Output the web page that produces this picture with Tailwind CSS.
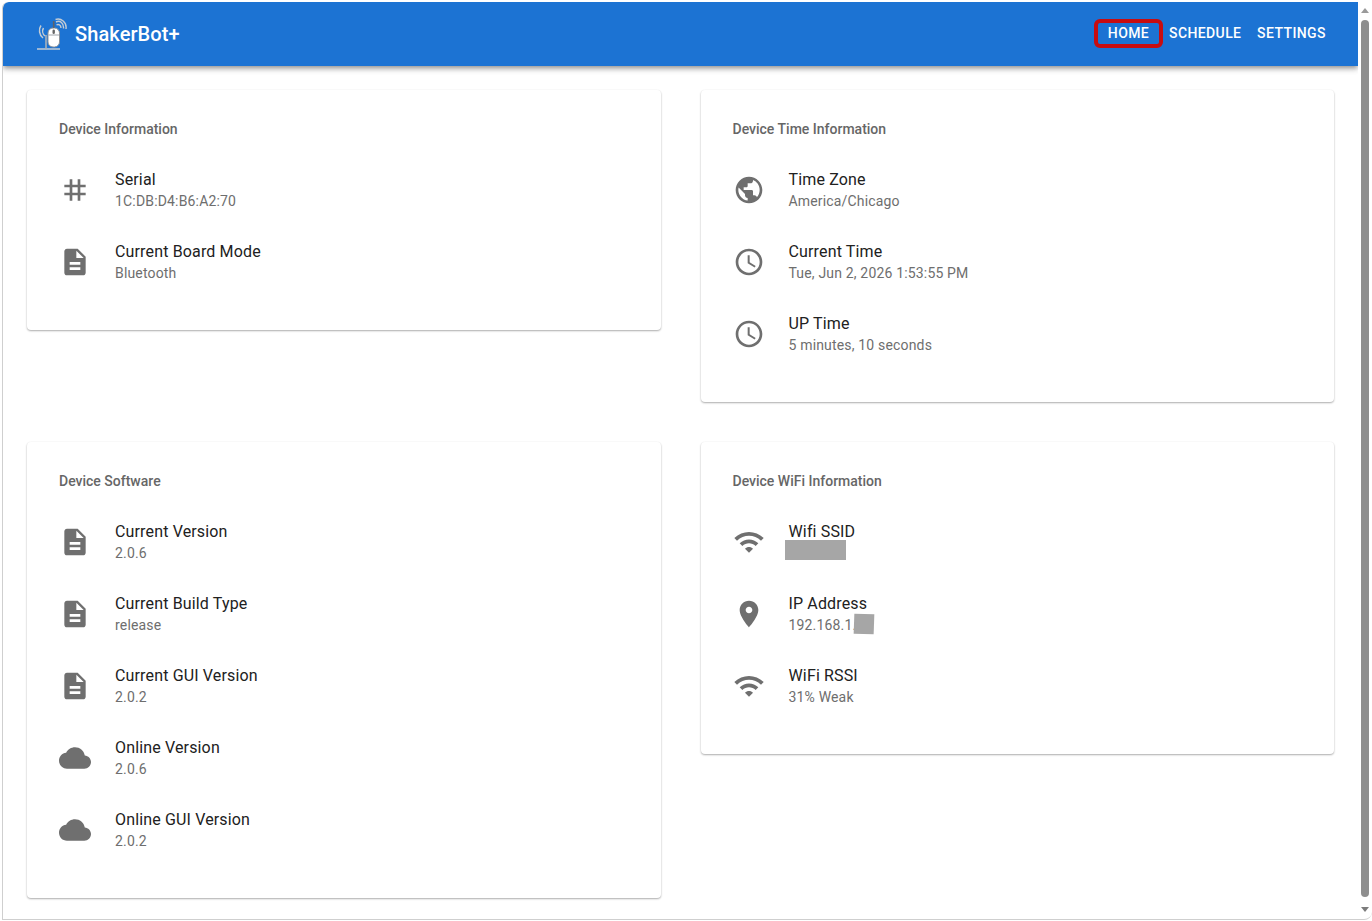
<!DOCTYPE html>
<html lang="en">
<head>
  <meta charset="UTF-8">
  <title>ShakerBot+</title>
  <script src="https://cdn.jsdelivr.net/npm/@tailwindcss/browser@4"></script>
</head>
<body class="bg-white font-['Roboto',sans-serif] overflow-hidden">
  <div class="w-[1372px] h-[921px] flex pt-[2px] pl-[2px] overflow-hidden">
    <div class="w-[1356px] h-[918px] border-l border-b border-[#cfcfcf] rounded-tl-[6px] overflow-hidden">
      <!-- app bar -->
      <header class="relative z-10 h-[64px] bg-[#1c73d3] rounded-tl-[6px] flex items-center pl-[33px] pr-[32px] shadow-[0_2px_4px_-1px_rgba(0,0,0,.3),0_4px_5px_0_rgba(0,0,0,.14),0_1px_10px_0_rgba(0,0,0,.12)]">
        <svg class="w-[32px] h-[32px]" viewBox="0 0 32 32" fill="none">
          <path d="M1 31H24" stroke="#c4ccd4" stroke-width="1.600"/>
          <path d="M10 31V17" stroke="#aab2ba" stroke-width="1.600"/>
          <path d="M9 18C6.500 16 6 12.500 7.500 10M7 20C3 17 2.500 11 5 7.500" stroke="#c4ccd4" stroke-width="1.500"/>
          <path d="M20.500 7C22.500 5.800 25 7 25 10M20 4C24 2 28 5 27.500 10.500M19.500 1.500C25 -.2 31 4 30 11" stroke="#c4ccd4" stroke-width="1.400"/>
          <rect x="12" y="10" width="11.500" height="19" rx="5" fill="#fff" stroke="#8b9198"/>
          <path d="M12.500 17H23" stroke="#a0a5ab"/>
          <path d="M17.700 10V3" stroke="#5f6369" stroke-width="1.600"/>
          <rect x="16.500" y="11.500" width="2.400" height="4.500" rx="1.200" fill="#666"/>
        </svg>
        <div class="ml-[7px] text-[20px] leading-[32px] font-medium tracking-[.1px] text-white">ShakerBot+</div>
        <nav class="ml-auto flex items-center h-full text-white text-[14px] font-medium tracking-[.4px] mb-[1px]">
          <a class="w-[69px] h-[29px] flex items-center justify-center border-[4px] border-[#c80c10] rounded-[6px]">HOME</a>
          <a class="ml-[6px] w-[72px] text-center">SCHEDULE</a>
          <a class="ml-[16px] w-[69px] text-center">SETTINGS</a>
        </nav>
      </header>

      <main class="p-[24px] grid grid-cols-2 gap-x-[40px] gap-y-[40px] items-start content-start">
        <!-- Device Information -->
        <section class="bg-white rounded-[4px] p-[32px] h-[240px] shadow-[0_1px_2px_0_rgba(0,0,0,.32),0_0_2px_0_rgba(0,0,0,.03)]">
          <h2 class="text-[14px] leading-[14px] font-medium text-[#666] mb-[18px]">Device Information</h2>
          <div class="h-[72px] flex items-center">
            <svg class="w-[32px] h-[32px] fill-[#6f6f6f] shrink-0" viewBox="0 0 24 24"><path d="M20 10V8h-4V4h-2v4h-4V4H8v4H4v2h4v4H4v2h4v4h2v-4h4v4h2v-4h4v-2h-4v-4h4zm-6 4h-4v-4h4v4z"/></svg>
            <div class="ml-[24px]">
              <div class="text-[16px] leading-[22px] tracking-[.15px] text-[#212121]">Serial</div>
              <div class="text-[14px] leading-[20px] tracking-[.17px] text-[#6e6e6e]">1C:DB:D4:B6:A2:70</div>
            </div>
          </div>
          <div class="h-[72px] flex items-center">
            <svg class="w-[32px] h-[32px] fill-[#6f6f6f] shrink-0" viewBox="0 0 24 24"><path d="M14 2H6c-1.100 0-2 .9-2 2v16c0 1.100.9 2 2 2h12c1.100 0 2-.9 2-2V8l-6-6zm2 16H8v-2h8v2zm0-4H8v-2h8v2zm-3-5V3.500L18.500 9H13z"/></svg>
            <div class="ml-[24px]">
              <div class="text-[16px] leading-[22px] tracking-[.15px] text-[#212121]">Current Board Mode</div>
              <div class="text-[14px] leading-[20px] tracking-[.17px] text-[#6e6e6e]">Bluetooth</div>
            </div>
          </div>
        </section>

        <!-- Device Time Information -->
        <section class="bg-white rounded-[4px] p-[32px] h-[312px] shadow-[0_1px_2px_0_rgba(0,0,0,.32),0_0_2px_0_rgba(0,0,0,.03)]">
          <h2 class="text-[14px] leading-[14px] font-medium text-[#666] mb-[18px]">Device Time Information</h2>
          <div class="h-[72px] flex items-center">
            <svg class="w-[32px] h-[32px] fill-[#6f6f6f] shrink-0" viewBox="0 0 24 24"><path d="M12 2C6.480 2 2 6.480 2 12s4.480 10 10 10 10-4.480 10-10S17.520 2 12 2zm-1 17.930c-3.950-.49-7-3.850-7-7.930 0-.62.08-1.210.21-1.790L9 15v1c0 1.100.9 2 2 2v1.930zm6.900-2.540c-.26-.81-1-1.390-1.900-1.390h-1v-3c0-.55-.45-1-1-1H8v-2h2c.55 0 1-.45 1-1V7h2c1.100 0 2-.9 2-2v-.41c2.930 1.190 5 4.060 5 7.410 0 2.080-.8 3.970-2.100 5.390z"/></svg>
            <div class="ml-[24px]">
              <div class="text-[16px] leading-[22px] tracking-[.15px] text-[#212121]">Time Zone</div>
              <div class="text-[14px] leading-[20px] tracking-[.17px] text-[#6e6e6e]">America/Chicago</div>
            </div>
          </div>
          <div class="h-[72px] flex items-center">
            <svg class="w-[32px] h-[32px] fill-[#6f6f6f] shrink-0" viewBox="0 0 24 24"><path d="M11.990 2C6.470 2 2 6.480 2 12s4.470 10 9.990 10C17.520 22 22 17.520 22 12S17.520 2 11.990 2zM12 20c-4.420 0-8-3.580-8-8s3.580-8 8-8 8 3.580 8 8-3.580 8-8 8z"/><path d="M12.500 7H11v6l5.250 3.150.75-1.230-4.500-2.670z"/></svg>
            <div class="ml-[24px]">
              <div class="text-[16px] leading-[22px] tracking-[.15px] text-[#212121]">Current Time</div>
              <div class="text-[14px] leading-[20px] tracking-[.17px] text-[#6e6e6e]">Tue, Jun 2, 2026 1:53:55 PM</div>
            </div>
          </div>
          <div class="h-[72px] flex items-center">
            <svg class="w-[32px] h-[32px] fill-[#6f6f6f] shrink-0" viewBox="0 0 24 24"><path d="M11.990 2C6.470 2 2 6.480 2 12s4.470 10 9.990 10C17.520 22 22 17.520 22 12S17.520 2 11.990 2zM12 20c-4.420 0-8-3.580-8-8s3.580-8 8-8 8 3.580 8 8-3.580 8-8 8z"/><path d="M12.500 7H11v6l5.250 3.150.75-1.230-4.500-2.670z"/></svg>
            <div class="ml-[24px]">
              <div class="text-[16px] leading-[22px] tracking-[.15px] text-[#212121]">UP Time</div>
              <div class="text-[14px] leading-[20px] tracking-[.17px] text-[#6e6e6e]">5 minutes, 10 seconds</div>
            </div>
          </div>
        </section>

        <!-- Device Software -->
        <section class="bg-white rounded-[4px] p-[32px] h-[456px] shadow-[0_1px_2px_0_rgba(0,0,0,.32),0_0_2px_0_rgba(0,0,0,.03)]">
          <h2 class="text-[14px] leading-[14px] font-medium text-[#666] mb-[18px]">Device Software</h2>
          <div class="h-[72px] flex items-center">
            <svg class="w-[32px] h-[32px] fill-[#6f6f6f] shrink-0" viewBox="0 0 24 24"><path d="M14 2H6c-1.100 0-2 .9-2 2v16c0 1.100.9 2 2 2h12c1.100 0 2-.9 2-2V8l-6-6zm2 16H8v-2h8v2zm0-4H8v-2h8v2zm-3-5V3.500L18.500 9H13z"/></svg>
            <div class="ml-[24px]">
              <div class="text-[16px] leading-[22px] tracking-[.15px] text-[#212121]">Current Version</div>
              <div class="text-[14px] leading-[20px] tracking-[.17px] text-[#6e6e6e]">2.0.6</div>
            </div>
          </div>
          <div class="h-[72px] flex items-center">
            <svg class="w-[32px] h-[32px] fill-[#6f6f6f] shrink-0" viewBox="0 0 24 24"><path d="M14 2H6c-1.100 0-2 .9-2 2v16c0 1.100.9 2 2 2h12c1.100 0 2-.9 2-2V8l-6-6zm2 16H8v-2h8v2zm0-4H8v-2h8v2zm-3-5V3.500L18.500 9H13z"/></svg>
            <div class="ml-[24px]">
              <div class="text-[16px] leading-[22px] tracking-[.15px] text-[#212121]">Current Build Type</div>
              <div class="text-[14px] leading-[20px] tracking-[.17px] text-[#6e6e6e]">release</div>
            </div>
          </div>
          <div class="h-[72px] flex items-center">
            <svg class="w-[32px] h-[32px] fill-[#6f6f6f] shrink-0" viewBox="0 0 24 24"><path d="M14 2H6c-1.100 0-2 .9-2 2v16c0 1.100.9 2 2 2h12c1.100 0 2-.9 2-2V8l-6-6zm2 16H8v-2h8v2zm0-4H8v-2h8v2zm-3-5V3.500L18.500 9H13z"/></svg>
            <div class="ml-[24px]">
              <div class="text-[16px] leading-[22px] tracking-[.15px] text-[#212121]">Current GUI Version</div>
              <div class="text-[14px] leading-[20px] tracking-[.17px] text-[#6e6e6e]">2.0.2</div>
            </div>
          </div>
          <div class="h-[72px] flex items-center">
            <svg class="w-[32px] h-[32px] fill-[#6f6f6f] shrink-0" viewBox="0 0 24 24"><path d="M19.350 10.040C18.670 6.590 15.640 4 12 4 9.110 4 6.600 5.640 5.350 8.040 2.340 8.360 0 10.910 0 14c0 3.310 2.690 6 6 6h13c2.760 0 5-2.240 5-5 0-2.640-2.050-4.780-4.650-4.960z"/></svg>
            <div class="ml-[24px]">
              <div class="text-[16px] leading-[22px] tracking-[.15px] text-[#212121]">Online Version</div>
              <div class="text-[14px] leading-[20px] tracking-[.17px] text-[#6e6e6e]">2.0.6</div>
            </div>
          </div>
          <div class="h-[72px] flex items-center">
            <svg class="w-[32px] h-[32px] fill-[#6f6f6f] shrink-0" viewBox="0 0 24 24"><path d="M19.350 10.040C18.670 6.590 15.640 4 12 4 9.110 4 6.600 5.640 5.350 8.040 2.340 8.360 0 10.910 0 14c0 3.310 2.690 6 6 6h13c2.760 0 5-2.240 5-5 0-2.640-2.050-4.780-4.650-4.960z"/></svg>
            <div class="ml-[24px]">
              <div class="text-[16px] leading-[22px] tracking-[.15px] text-[#212121]">Online GUI Version</div>
              <div class="text-[14px] leading-[20px] tracking-[.17px] text-[#6e6e6e]">2.0.2</div>
            </div>
          </div>
        </section>

        <!-- Device WiFi Information -->
        <section class="bg-white rounded-[4px] p-[32px] h-[312px] shadow-[0_1px_2px_0_rgba(0,0,0,.32),0_0_2px_0_rgba(0,0,0,.03)]">
          <h2 class="text-[14px] leading-[14px] font-medium text-[#666] mb-[18px]">Device WiFi Information</h2>
          <div class="h-[72px] flex items-center">
            <svg class="w-[32px] h-[32px] fill-[#6f6f6f] shrink-0" viewBox="0 0 24 24"><path d="M1 9l2 2c4.970-4.970 13.030-4.970 18 0l2-2C16.930 2.930 7.080 2.930 1 9zm8 8l3 3 3-3c-1.650-1.660-4.340-1.660-6 0zm-4-4l2 2c2.760-2.760 7.240-2.760 10 0l2-2C15.140 9.140 8.870 9.140 5 13z"/></svg>
            <div class="ml-[24px] relative">
              <div class="text-[16px] leading-[22px] tracking-[.15px] text-[#212121]">Wifi SSID</div>
              <div class="text-[14px] leading-[20px] tracking-[.17px] text-[#6e6e6e]">&nbsp;</div>
              <div class="absolute left-[-4px] top-[19px] w-[61px] h-[20px] bg-[#a6a6a6]"></div>
            </div>
          </div>
          <div class="h-[72px] flex items-center">
            <svg class="w-[32px] h-[32px] fill-[#6f6f6f] shrink-0" viewBox="0 0 24 24"><path d="M12 2C8.130 2 5 5.130 5 9c0 5.250 7 13 7 13s7-7.750 7-13c0-3.870-3.130-7-7-7zm0 9.500c-1.380 0-2.500-1.120-2.500-2.500s1.120-2.500 2.500-2.500 2.500 1.120 2.500 2.500-1.120 2.500-2.500 2.500z"/></svg>
            <div class="ml-[24px] relative">
              <div class="text-[16px] leading-[22px] tracking-[.15px] text-[#212121]">IP Address</div>
              <div class="text-[14px] leading-[20px] tracking-[.17px] text-[#6e6e6e]">192.168.1.</div>
              <div class="absolute left-[65px] top-[21px] w-[20px] h-[20px] bg-[#a6a6a6] rotate-[2deg]"></div>
            </div>
          </div>
          <div class="h-[72px] flex items-center">
            <svg class="w-[32px] h-[32px] fill-[#6f6f6f] shrink-0" viewBox="0 0 24 24"><path d="M1 9l2 2c4.970-4.970 13.030-4.970 18 0l2-2C16.930 2.930 7.080 2.930 1 9zm8 8l3 3 3-3c-1.650-1.660-4.340-1.660-6 0zm-4-4l2 2c2.760-2.760 7.240-2.760 10 0l2-2C15.140 9.140 8.870 9.140 5 13z"/></svg>
            <div class="ml-[24px]">
              <div class="text-[16px] leading-[22px] tracking-[.15px] text-[#212121]">WiFi RSSI</div>
              <div class="text-[14px] leading-[20px] tracking-[.17px] text-[#6e6e6e]">31% Weak</div>
            </div>
          </div>
        </section>
      </main>
    </div>

    <!-- scrollbar -->
    <div class="w-[14px] h-[918px] flex flex-col items-center border-b border-[#cfcfcf] rounded-br-[8px]">
      <svg class="w-[8px] h-[5px] mt-[6px] fill-[#9a9a9a]" viewBox="0 0 8 5"><path d="M4 0l4 5H0z"/></svg>
      <div class="w-[8px] h-[877px] mt-[7px] bg-[#8e8e8e] rounded-[4px]"></div>
      <svg class="w-[8px] h-[5px] mt-[10px] fill-[#7c7c7c]" viewBox="0 0 8 5"><path d="M0 0h8L4 5z"/></svg>
    </div>
  </div>
</body>
</html>
